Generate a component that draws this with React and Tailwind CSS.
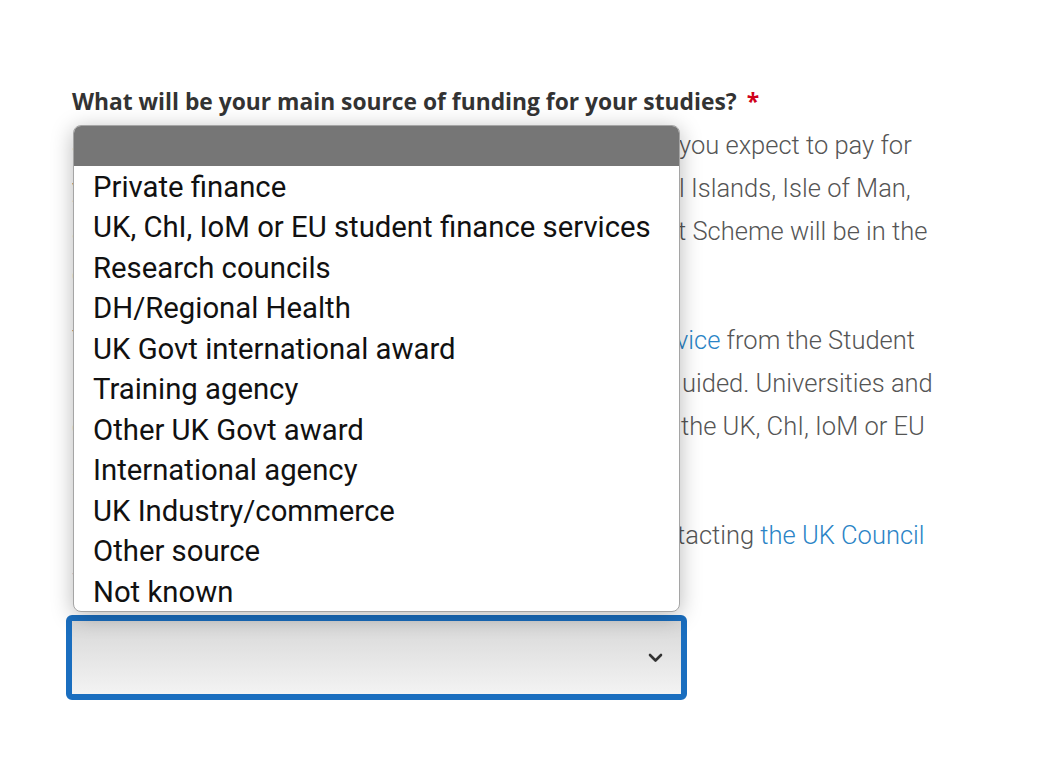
import React from "react";

const options = [
  "Private finance",
  "UK, ChI, IoM or EU student finance services",
  "Research councils",
  "DH/Regional Health",
  "UK Govt international award",
  "Training agency",
  "Other UK Govt award",
  "International agency",
  "UK Industry/commerce",
  "Other source",
  "Not known",
];

// each line: hidden part sits under the open dropdown, tail shows to its right
function Line({ w, hidden, children }) {
  return (
    <div className="flex whitespace-nowrap">
      <span className={`${w} shrink-0 overflow-hidden`}>{hidden}</span>
      <span>{children}</span>
    </div>
  );
}

function Link({ children }) {
  return <span className="text-[#2b84c6]">{children}</span>;
}

export default function App() {
  return (
    <div className="min-h-screen bg-white font-['Roboto',sans-serif]">
      <div className="px-[72px] pt-[88px] w-[980px]">
        <h2 className="font-['Open_Sans',sans-serif] text-[22.8px] leading-[28px] font-bold text-[#333] whitespace-nowrap">
          What will be your main source of funding for your studies?
          <span className="ml-[10px] text-[#d0021b]">*</span>
        </h2>

        <div className="mt-2 text-[25.5px] leading-[43px] font-light text-[#555]">
          <div>
            <Line w="w-[607px]" hidden="Select the option which best describes how ">
              you expect to pay for
            </Line>
            <Line w="w-[607px]" hidden="your tuition fees. Student finance services in England, Channe">
              l Islands, Isle of Man,
            </Line>
            <Line w="w-[606px]" hidden="and Wales, and the NHS Bursary and Studen">
              t Scheme will be in the
            </Line>
            <div>country.</div>
          </div>

          <div className="mt-[23px]">
            <Line w="w-[604px]" hidden="You are strongly advised to seek ad">
              <Link>vice</Link> from the Student
            </Line>
            <Line w="w-[610px]" hidden="Finance Company before applying, so you are g">
              uided. Universities and
            </Line>
            <Line w="w-[609px]" hidden="colleges cannot give advice about funding from ">
              the UK, ChI, IoM or EU
            </Line>
            <div>services.</div>
          </div>

          <div className="mt-[23px]">
            <Line w="w-[605px]" hidden="International students can find help by con">
              tacting <Link>the UK Council</Link>
            </Line>
            <div>
              <Link>for International Student Affairs</Link>.
            </div>
          </div>
        </div>

        {/* select with its open list */}
        <div className="relative mt-[15px] -ml-[6px] w-[621px]">
          <div className="absolute left-[7px] bottom-[calc(100%+3px)] w-[607px] overflow-hidden rounded-lg border border-[#a5a5a5] bg-white shadow-[0_4px_22px_rgba(0,0,0,0.28)]">
            <div className="h-10 bg-[#767676]" />
            {options.map((o) => (
              <div key={o} className="px-[19px] pt-[3px] text-[29.3px] leading-[37.5px] text-[#111] whitespace-nowrap">
                {o}
              </div>
            ))}
          </div>

          <div className="h-[85px] rounded-md border-[6px] border-[#1a6ebf] bg-gradient-to-b from-[#d8d8d8] to-[#f3f3f3] flex items-center justify-end pr-[18px]">
            <svg width="15" height="10" viewBox="0 0 15 10" fill="none">
              <path d="M2 2l5.5 5.5L13 2" stroke="#333" strokeWidth="2.6" strokeLinecap="round" strokeLinejoin="round" />
            </svg>
          </div>
        </div>
      </div>
    </div>
  );
}
